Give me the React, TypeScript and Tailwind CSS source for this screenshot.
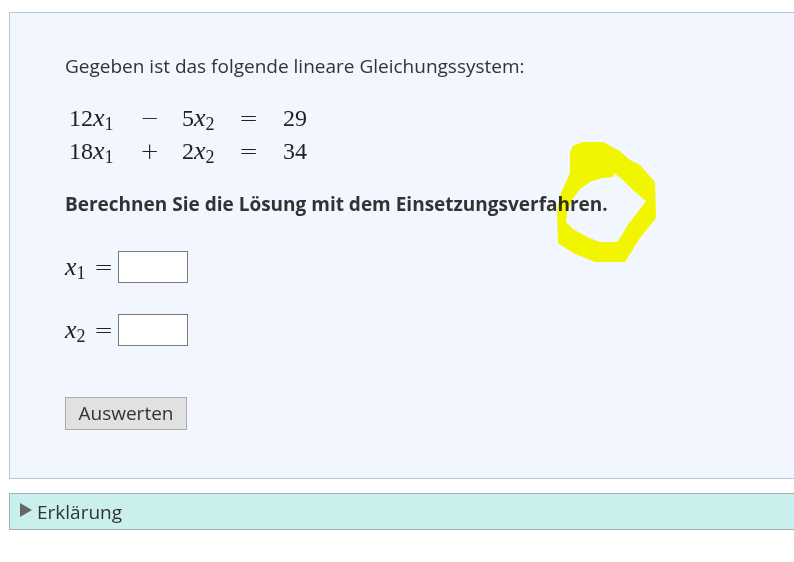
const mathFont = "font-['Liberation_Serif',serif]";

const Term = ({ coef, sub }: { coef?: string; sub: string }) => (
  <span className={`${mathFont} text-[24px] leading-[33px] text-[#222] whitespace-nowrap`}>
    {coef}
    <i className="text-[26px] leading-none">x</i>
    <span className="relative top-[4px] text-[18px] leading-none">{sub}</span>
  </span>
);

const Sym = ({ children }: { children: string }) => (
  <span className="font-['DejaVu_Sans',sans-serif] text-[23px] leading-[33px] font-light text-[#222]">{children}</span>
);

const Num = ({ children }: { children: string }) => (
  <span className={`${mathFont} text-[24px] leading-[33px] text-[#222]`}>{children}</span>
);

const Field = ({ sub }: { sub: string }) => (
  <div className="flex h-[32px] items-center">
    <div className="w-[29px]">
      <Term sub={sub} />
    </div>
    <div className="w-[24px]">
      <Sym>=</Sym>
    </div>
    <div className="h-[32px] w-[70px] border border-[#7b7b7b] bg-white"></div>
  </div>
);

const App = () => {
  return (
    <div className="relative h-[562px] w-[794px] overflow-hidden bg-white font-['Open_Sans',sans-serif] text-[#333]">
      <div className="ml-[9px] mt-[12px] h-[467px] w-[800px] border border-[#b4c8dc] bg-[#f1f6ff] pl-[55px] pt-[40px]">
        <p className="text-[19px] leading-[27px]">Gegeben ist das folgende lineare Gleichungssystem:</p>
        <div className="ml-[4px] mt-[22px] grid w-fit grid-cols-[71px_42px_57px_44px_auto]">
          <Term coef="12" sub="1" />
          <Sym>−</Sym>
          <Term coef="5" sub="2" />
          <Sym>=</Sym>
          <Num>29</Num>
          <Term coef="18" sub="1" />
          <Sym>+</Sym>
          <Term coef="2" sub="2" />
          <Sym>=</Sym>
          <Num>34</Num>
        </div>
        <p className="mt-[23px] text-[19px] font-bold leading-[27px]">
          Berechnen Sie die Lösung mit dem Einsetzungsverfahren.
        </p>
        <div className="mt-[33px] flex flex-col gap-[31px]">
          <Field sub="1" />
          <Field sub="2" />
        </div>
        <button className="mt-[51px] block h-[33px] w-[122px] border border-[#aaa] bg-[#e1e1e1] text-[19px] leading-[27px]">
          Auswerten
        </button>
      </div>
      <div className="ml-[9px] mt-[14px] flex h-[37px] w-[800px] items-center border-y border-l border-[#a2afbd] bg-[#c9f0ed] pl-[10px] text-[19px]">
        <svg width="12" height="14" viewBox="0 0 12 14" className="mb-[3px] mr-[5px]">
          <path d="M0 0 L12 7 L0 14 Z" fill="#666" />
        </svg>
        <span className="relative top-[1px]">Erklärung</span>
      </div>
      {/* marker scribble drawn over the page */}
      <svg width="794" height="562" viewBox="0 0 794 562" className="absolute left-0 top-0 mix-blend-multiply">
        <path
          fillRule="evenodd"
          fill="#ffff00"
          d="M570 152 L573 146 L582 142 L603 142 L620 151 L630 160 L640 165 L655 182 L656 218 L640 238 L625 262 L595 262 L573 253 L558 243 L557 210 L561 193 L570 173 Z M614 173 L613 177 L602 178 L590 182 L580 189 L572 200 L567 212 L566 222 L573 229 L587 237 L600 242 L617 242 L622 235 L627 226 L637 213 L646 201 L633 190 L623 180 Z"
        />
      </svg>
    </div>
  );
};

export default App;
